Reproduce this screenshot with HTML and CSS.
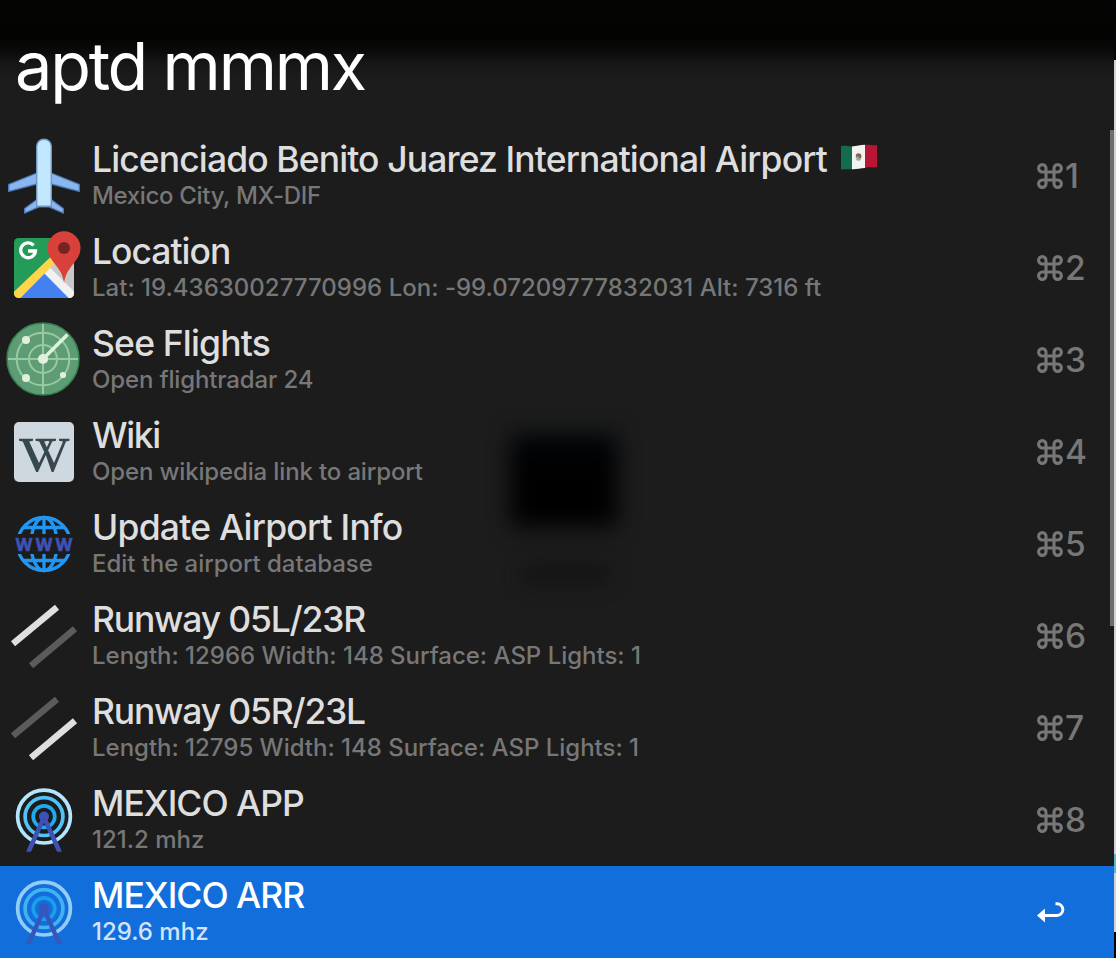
FILE: index.html
```html
<!DOCTYPE html>
<html lang="en">
<head>
<meta charset="utf-8">
<title>aptd mmmx</title>
<link rel="stylesheet" href="styles.css">
</head>
<body>
<svg class="defs" aria-hidden="true">
  <defs>
    <symbol id="cmd" viewBox="0 0 26 26"><path d="M9 9H5.300A3.700 3.700 0 1 1 9 5.300V20.700A3.700 3.700 0 1 1 5.300 17H20.700A3.700 3.700 0 1 1 17 20.700V5.300A3.700 3.700 0 1 1 20.700 9Z" fill="none" stroke="currentColor" stroke-width="3.100"/></symbol>
    <symbol id="antenna" viewBox="0 1.700 88 92">
      <g fill="none" stroke-width="3.700">
        <circle cx="44" cy="44.300" r="26.400" stroke="#b3e5fc"/>
        <circle cx="44" cy="44.300" r="18.900" stroke="#4fc3f7"/>
        <circle cx="44" cy="44.300" r="10.800" stroke="#1eaaf1"/>
      </g>
      <path d="M42 44h4L62 79.500h-5L44 50.500 31 79.500h-5Z" fill="#3f51b5"/>
      <circle cx="44" cy="44.300" r="5" fill="#3f51b5"/>
    </symbol>
  </defs>
</svg>
<div class="launcher">
  <header class="search"><span class="query">aptd mmmx</span></header>
  <main class="results">
    <div class="row">
      <svg class="icon" viewBox="0 0 88 92">
        <g fill="#8bb7f0" stroke="#4e7ab5" stroke-width="1.300">
          <path d="M37 43 8.700 54.500v7L37 54ZM51 43l28.300 11.500v7L51 54Z"/>
          <path d="M37 69.500 24.700 78.500v4.500L39 76.800h10l14.300 6.200v-4.500L51 69.500Z"/>
        </g>
        <path d="M36.700 76.300V16.500c0-4 3-7.300 7.300-7.300s7.300 3.300 7.300 7.300v59.800Z" fill="#c2e8ff" stroke="#7496c4" stroke-width="1.400"/>
      </svg>
      <div class="copy"><div class="title t1">Licenciado Benito Juarez International Airport <svg class="flag" viewBox="0 0 38 27">
        <path d="M1 2c5-1 8 1 13 .3V25c-5 .7-8-.3-13 .5Z" fill="#136c4b"/>
        <path d="M12 2.500C17 2 20 1 25 .8V24c-5 0-8 1.500-13 1.300Z" fill="#f3f3f1"/>
        <path d="M25 .8c5-.5 8 1 12 .3v22c-4 .8-7-.5-12 .7Z" fill="#b91635"/>
        <path d="M15 13q3 5 7 0l-2 3.500h-3Z" fill="#5d9d8b"/><circle cx="18.600" cy="12" r="2.800" fill="#8d6240"/><circle cx="17.500" cy="13.500" r="1.200" fill="#65bdc6"/>
      </svg></div><div class="sub s1">Mexico City, MX-DIF</div></div>
      <div class="key"><svg class="cmd"><use href="#cmd"/></svg>1</div>
    </div>
    <div class="row">
      <svg class="icon" viewBox="0 0 88 92">
        <defs><clipPath id="map"><rect x="14" y="16" width="60" height="60" rx="4.500"/></clipPath></defs>
        <g clip-path="url(#map)">
          <path d="M14 16h60v60H14Z" fill="#259b5a"/>
          <path d="M74 22v53L46 47Z" fill="#c9c9c9"/>
          <path d="M44 50 73 79H15Z" fill="#4480ef"/>
          <path d="m44.200 51.200 5.800-5.800L76 71.400v8h-4Z" fill="#f1f1f1"/>
          <path d="M11 72.500 60 26v10L18 78.500h-7Z" fill="#ffd64b"/>
        </g>
        <path d="M64 61c-.9-7.500-3.500-11.500-7.500-17C52 38 47.600 34 47.600 25.800a16.400 16.400 0 0 1 32.900 0C80.500 34 76 38 71.600 44 67.700 49.500 65 53.500 64.100 61Z" fill="#d8403a"/>
        <circle cx="64" cy="26" r="6" fill="#752422"/>
        <path d="M33.600 23.300A7.400 7.400 0 1 0 35.500 29H28" fill="none" stroke="#fff" stroke-width="3.300"/>
      </svg>
      <div class="copy"><div class="title t2">Location</div><div class="sub s2">Lat: 19.43630027770996 Lon: -99.07209777832031 Alt: 7316 ft</div></div>
      <div class="key"><svg class="cmd"><use href="#cmd"/></svg>2</div>
    </div>
    <div class="row">
      <svg class="icon" viewBox="0 0 88 92">
        <circle cx="43" cy="45" r="36" fill="#5e9c76" stroke="#34804e" stroke-width="1.500"/>
        <g fill="none" stroke="#98ca9f" stroke-width="2"><circle cx="43" cy="45" r="26.300"/><circle cx="43" cy="45" r="14"/><path d="M8 45h70M43 10v70"/></g>
        <path d="M43 45 67.500 20.500" stroke="#dff0df" stroke-width="3.500"/>
        <g fill="#dff0df"><circle cx="43" cy="45" r="5.100"/><circle cx="26" cy="26" r="4"/><circle cx="26" cy="64" r="4"/><circle cx="63" cy="61" r="3.100"/></g>
      </svg>
      <div class="copy"><div class="title t3">See Flights</div><div class="sub s3">Open flightradar 24</div></div>
      <div class="key"><svg class="cmd"><use href="#cmd"/></svg>3</div>
    </div>
    <div class="row">
      <svg class="icon" viewBox="0 0 88 92">
        <rect x="14" y="16" width="60" height="60" rx="5" fill="#cfd8de"/>
        <path fill="#37474f" d="M19 32.800h14v2l-3.800.6L39 57l5.300-11-5-10.600-3.800-.6v-2H48v2l-3.800.6 2.600 5.800 2.800-5.800-3-.6v-2H56v2l-3.800.6-4.100 8.900L54 57l9-21.600-4-.6v-2h10.500v2l-3.500.6L53.500 66h-1.800L45.800 49 38 66h-1.800L22.800 35.400l-3.800-.6Z"/>
      </svg>
      <div class="copy"><div class="title t4">Wiki</div><div class="sub s4">Open wikipedia link to airport</div></div>
      <div class="key"><svg class="cmd"><use href="#cmd"/></svg>4</div>
    </div>
    <div class="row">
      <svg class="icon" viewBox="0 0 88 92">
        <defs><clipPath id="globe"><path d="M0 0h88v36H0ZM0 56h88v36H0Z"/></clipPath></defs>
        <g clip-path="url(#globe)" fill="none" stroke="#2196f3" stroke-width="3.300"><circle cx="44" cy="46" r="26.500"/><ellipse cx="44" cy="46" rx="13" ry="26.500"/><path d="M44 19v54M24 29.500h40M24 62.500h40"/></g>
        <text class="www" y="52.500" x="15.800 35.800 55.800">WWW</text>
      </svg>
      <div class="copy"><div class="title t5">Update Airport Info</div><div class="sub s5">Edit the airport database</div></div>
      <div class="key"><svg class="cmd"><use href="#cmd"/></svg>5</div>
    </div>
    <div class="row">
      <svg class="icon" viewBox="0 0 88 92"><path d="M13 53.800 57 17.200" stroke="#dfdfdf" stroke-width="6.500"/><path d="m31 75.800 44-37" stroke="#5b5b5b" stroke-width="6.500"/></svg>
      <div class="copy"><div class="title t6">Runway 05L/23R</div><div class="sub s6">Length: 12966 Width: 148 Surface: ASP Lights: 1</div></div>
      <div class="key"><svg class="cmd"><use href="#cmd"/></svg>6</div>
    </div>
    <div class="row">
      <svg class="icon" viewBox="0 0 88 92"><path d="M13 53.800 57 17.200" stroke="#5b5b5b" stroke-width="6.500"/><path d="m31 75.800 44-37" stroke="#dfdfdf" stroke-width="6.500"/></svg>
      <div class="copy"><div class="title t7">Runway 05R/23L</div><div class="sub s7">Length: 12795 Width: 148 Surface: ASP Lights: 1</div></div>
      <div class="key"><svg class="cmd"><use href="#cmd"/></svg>7</div>
    </div>
    <div class="row">
      <svg class="icon"><use href="#antenna"/></svg>
      <div class="copy"><div class="title t8">MEXICO APP</div><div class="sub s8">121.2 mhz</div></div>
      <div class="key"><svg class="cmd"><use href="#cmd"/></svg>8</div>
    </div>
    <div class="row selected">
      <svg class="icon faded"><use href="#antenna"/></svg>
      <div class="copy"><div class="title t9">MEXICO ARR</div><div class="sub s9">129.6 mhz</div></div>
      <div class="key"><svg class="enter" viewBox="0 0 28 22"><path d="M7 14.500h13a5.800 5.800 0 0 0 0-11.800h-1.500" fill="none" stroke="#fff" stroke-width="2.900"/><path d="M0 14.500 8 7.500v14Z" fill="#fff"/></svg></div>
    </div>
  </main>
  <div class="scrollbar"></div>
</div>
<div class="backdrop"></div>
</body>
</html>
```
FILE: styles.css
```css
* { box-sizing: border-box; }
body {
  margin: 0;
  display: flex;
  width: 1116px;
  height: 958px;
  overflow: hidden;
  background: #050505;
  font-family: Inter, "Noto Sans", sans-serif;
}
.defs { position: absolute; width: 0; height: 0; }
.launcher {
  position: relative;
  width: 1114px;
  height: 958px;
  overflow: hidden;
  border-top-right-radius: 6px;
  background: linear-gradient(#050504 0, #030302 38px, #0b0b0b 52px, #171717 64px, #1c1c1c 82px);
}
/* Dark shapes showing faintly through the translucent panel */
.launcher::before {
  content: "";
  position: absolute;
  left: 511px;
  top: 434px;
  width: 106px;
  height: 92px;
  background: linear-gradient(#00050a, #000 40%);
  filter: blur(11px);
}
.launcher::after {
  content: "";
  position: absolute;
  left: 522px;
  top: 564px;
  width: 88px;
  height: 20px;
  background: #141414;
  filter: blur(9px);
}
.backdrop {
  width: 2px;
  background: linear-gradient(#050505 60px, #d4d4d4 60px 854px, #62b5d7 854px 873px, #d4d4d4 873px 932px, #050505 932px);
}
.search { position: relative; height: 130px; padding: 24px 0 0 15px; }
.query {
  display: block;
  color: #fff;
  font-size: 66.5px;
  line-height: 84px;
  font-weight: 400;
  letter-spacing: -2.2px;
  white-space: pre;
}
.results { position: relative; z-index: 1; }
.row { display: flex; height: 92px; }
.row.selected { background: #126edb; }
.icon { flex: none; width: 88px; height: 92px; }
.faded { opacity: .8; }
.copy { flex: 1; padding: 9px 0 0 4px; white-space: nowrap; }
.title { height: 42px; line-height: 42px; font-size: 35.5px; font-weight: 500; color: #dedede; }
.sub { height: 30px; line-height: 30px; font-size: 24px; font-weight: 500; color: #777; }
.t1 { letter-spacing: -.89px; }
.t2 { letter-spacing: -1px; }
.t3 { letter-spacing: -.83px; }
.t4 { letter-spacing: -1.4px; }
.t5 { letter-spacing: -.77px; }
.t6, .t7 { letter-spacing: -1.2px; }
.t8, .t9 { letter-spacing: -1px; }
.s1 { letter-spacing: -.33px; }
.s2 { letter-spacing: .01px; }
.s3, .s4 { letter-spacing: -.14px; }
.s5 { letter-spacing: -.05px; }
.s6, .s7 { letter-spacing: -.02px; }
.selected .title { color: #fff; }
.selected .sub { color: #d3e4fa; }
.flag { width: 38px; height: 27px; margin-left: 5px; vertical-align: 1px; }
.key {
  display: flex;
  align-items: center;
  gap: 2px;
  width: 78px;
  height: 92px;
  padding-left: 1px;
  color: #777;
  font-size: 33.5px;
  font-weight: 500;
}
.cmd { width: 26px; height: 26px; }
.enter { width: 28px; height: 22px; }
.www { font: 700 17px "Open Sans", sans-serif; fill: #3f51b5; stroke: #3f51b5; stroke-width: .7px; }
.scrollbar {
  position: absolute;
  left: 1110px;
  top: 130px;
  width: 4px;
  height: 496px;
  background: #6e6e6e;
}
```
